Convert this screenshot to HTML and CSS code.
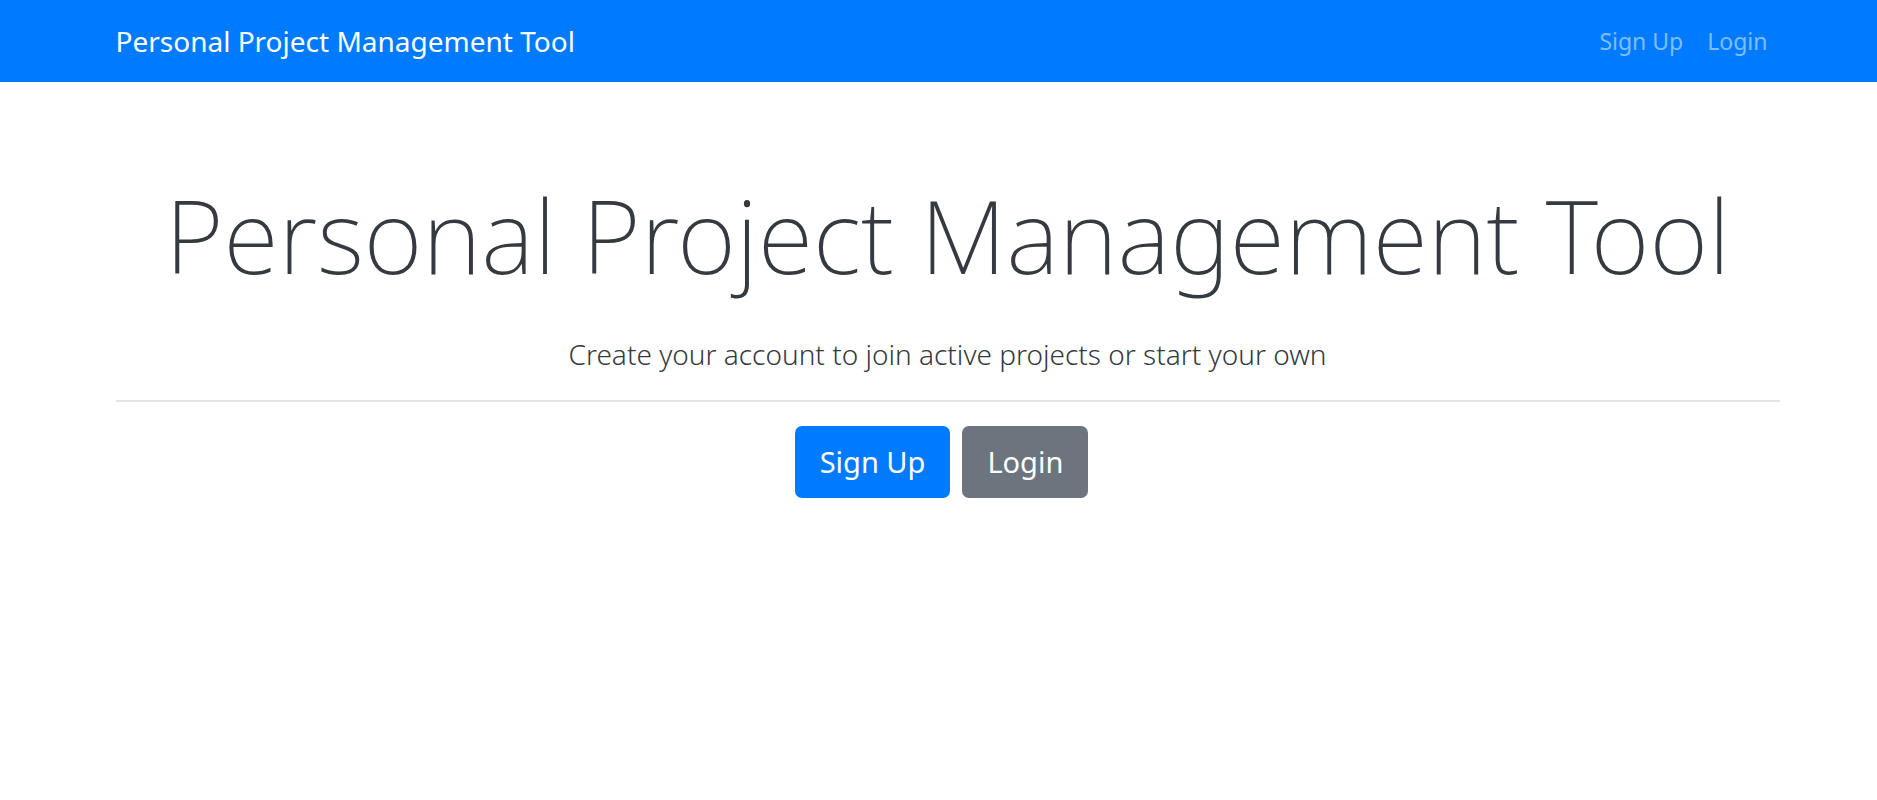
FILE: index.html
```html
<!DOCTYPE html>
<html lang="en">
<head>
<meta charset="utf-8">
<title>Personal Project Management Tool</title>
<link rel="stylesheet" href="styles.css">
</head>
<body>
<nav class="navbar">
  <div class="container navbar-row">
    <a class="brand" href="#">Personal Project Management Tool</a>
    <div class="nav-links">
      <a class="nav-link" href="#">Sign Up</a>
      <a class="nav-link" href="#">Login</a>
    </div>
  </div>
</nav>
<main class="landing">
  <div class="container">
    <h1 class="title">Personal Project Management Tool</h1>
    <p class="lead">Create your account to join active projects or start your own</p>
    <hr class="divider">
    <div class="actions">
      <a class="btn btn-primary" href="#">Sign Up</a>
      <a class="btn btn-secondary" href="#">Login</a>
    </div>
  </div>
</main>
</body>
</html>
```
FILE: styles.css
```css
* { box-sizing: border-box; }
body {
  margin: 0;
  background: #fff;
  color: #343a40;
  font-family: "Noto Sans", "Open Sans", sans-serif;
  font-size: 23px;
  line-height: 34px;
}
a { text-decoration: none; }
.container {
  width: 100%;
  max-width: 1708px;
  margin: 0 auto;
  padding: 0 22px;
}
.navbar { background: #007bff; padding: 12px 0 12px 18px; }
.navbar-row { display: flex; align-items: center; justify-content: space-between; }
.brand { color: #fff; font-size: 28px; line-height: 58px; }
.nav-links { display: flex; }
.nav-link { color: rgba(255, 255, 255, .5); padding: 12px; }
.landing { padding: 91px 0 0 18px; text-align: center; }
.title { margin: 0 0 35px; font-size: 101px; font-weight: 200; line-height: 124px; }
.lead { margin: 0; font-size: 28px; font-weight: 300; line-height: 44px; }
.divider { margin: 24px 0; border: 0; border-top: 2px solid #e5e5e5; }
.actions { display: flex; justify-content: center; }
.btn { margin-right: 12px; padding: 14px 25px; border-radius: 7px; color: #fff; font-size: 29px; line-height: 44px; }
.btn-primary { background: #007bff; }
.btn-secondary { background: #6c757d; }
```
